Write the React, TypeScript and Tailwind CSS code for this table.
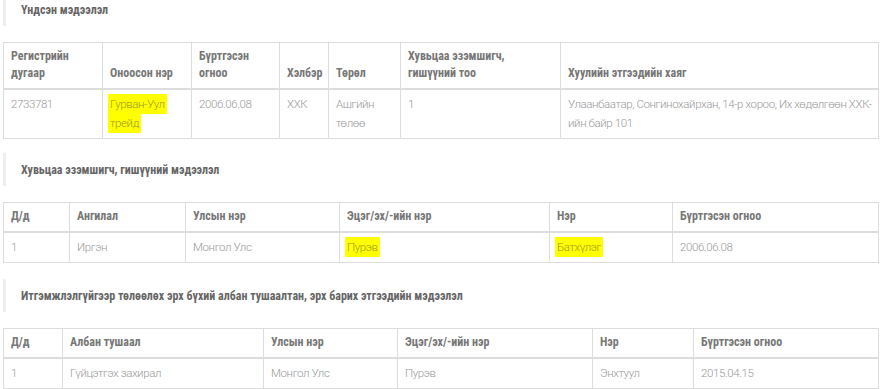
import React from 'react';

type Cell = { text: string; mark?: boolean };

const headFont = { fontFamily: '"Roboto Condensed", "Liberation Sans Narrow", Roboto, sans-serif' };

function Heading({ title }: { title: string }) {
  return (
    <div className="h-[33px] border-l-[3px] border-[#eeeeee] pl-[15px] flex items-center mb-[16px]">
      <span className="text-[12px] font-bold text-[#666666]" style={headFont}>{title}</span>
    </div>
  );
}

function Mark({ children }: { children: React.ReactNode }) {
  return <span className="bg-[#ffff00] text-[#9a9a20] box-decoration-clone px-[2px] -mx-[2px] py-[3px]">{children}</span>;
}

function DataTable({ widths, head, rows, mb }: { widths: number[]; head: string[]; rows: Cell[][]; mb: string }) {
  return (
    <table className={`w-full table-fixed border-collapse ${mb}`}>
      <colgroup>
        {widths.map((w, i) => <col key={i} style={{ width: w }} />)}
      </colgroup>
      <thead>
        <tr>
          {head.map((h, i) => (
            <th key={i} className="border border-[#dddddd] border-b-2 align-bottom text-left font-bold text-[12px] leading-[17px] text-[#777777] px-[7px] pt-[5px] pb-[6px]" style={headFont}>
              {h.split('\n').map((l, j) => <div key={j}>{l}</div>)}
            </th>
          ))}
        </tr>
      </thead>
      <tbody>
        {rows.map((r, i) => (
          <tr key={i}>
            {r.map((c, j) => (
              <td key={j} className="border border-[#dddddd] align-top text-[11.5px] tracking-[-0.4px] leading-[19px] font-light text-[#999999] pl-[7px] pr-[4px] py-[5px]">
                {c.mark ? <Mark>{c.text}</Mark> : c.text}
              </td>
            ))}
          </tr>
        ))}
      </tbody>
    </table>
  );
}

export default function App() {
  return (
    <div className="w-[880px] h-[389px] overflow-hidden bg-white">
      <div className="-mt-[7px] pl-[3px] pr-[2px]" style={{ fontFamily: 'Roboto, "Liberation Sans", sans-serif' }}>
        <Heading title="Үндсэн мэдээлэл" />
        <DataTable
          mb="mb-[14px]"
          widths={[99, 89, 88, 49, 72, 160, 318]}
          head={['Регистрийн\nдугаар', 'Оноосон нэр', 'Бүртгэсэн\nогноо', 'Хэлбэр', 'Төрөл', 'Хувьцаа эзэмшигч,\nгишүүний тоо', 'Хуулийн этгээдийн хаяг']}
          rows={[[
            { text: '2733781' },
            { text: 'Гурван-Уул трейд', mark: true },
            { text: '2006.06.08' },
            { text: 'ХХК' },
            { text: 'Ашгийн төлөө' },
            { text: '1' },
            { text: 'Улаанбаатар, Сонгинохайрхан, 14-р хороо, Их хөдөлгөөн ХХК-ийн байр 101' },
          ]]}
        />
        <Heading title="Хувьцаа эзэмшигч, гишүүний мэдээлэл" />
        <DataTable
          mb="mb-[16px]"
          widths={[66, 116, 154, 210, 123, 206]}
          head={['Д/д', 'Ангилал', 'Улсын нэр', 'Эцэг/эх/-ийн нэр', 'Нэр', 'Бүртгэсэн огноо']}
          rows={[[
            { text: '1' },
            { text: 'Иргэн' },
            { text: 'Монгол Улс' },
            { text: 'Пурэв', mark: true },
            { text: 'Батхүлэг', mark: true },
            { text: '2006.06.08' },
          ]]}
        />
        <Heading title="Итгэмжлэлгүйгээр төлөөлөх эрх бүхий албан тушаалтан, эрх барих этгээдийн мэдээлэл" />
        <DataTable
          mb="mb-[15px]"
          widths={[59, 201, 134, 195, 101, 185]}
          head={['Д/д', 'Албан тушаал', 'Улсын нэр', 'Эцэг/эх/-ийн нэр', 'Нэр', 'Бүртгэсэн огноо']}
          rows={[[
            { text: '1' },
            { text: 'Гүйцэтгэх захирал' },
            { text: 'Монгол Улс' },
            { text: 'Пурэв' },
            { text: 'Энхтуул' },
            { text: '2015.04.15' },
          ]]}
        />
      </div>
    </div>
  );
}
